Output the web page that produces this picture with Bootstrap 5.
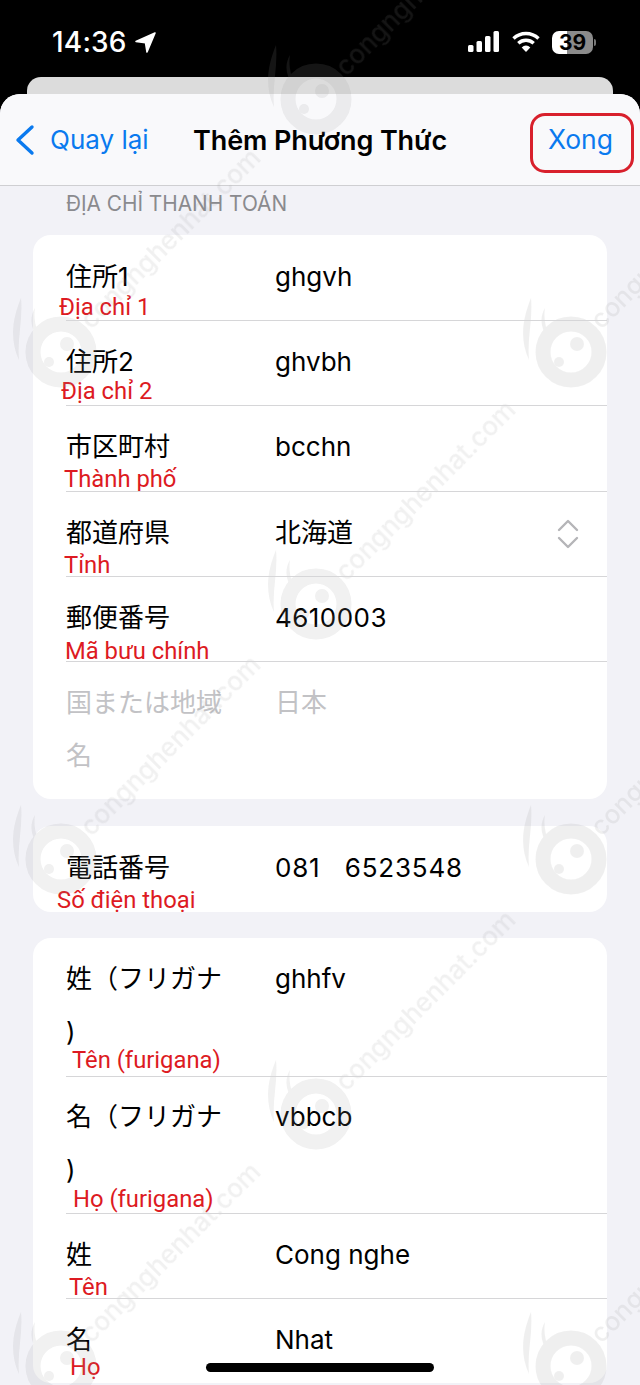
<!DOCTYPE html>
<html lang="vi">
<head>
<meta charset="utf-8">
<title>Thêm Phương Thức</title>
<link href="https://cdn.jsdelivr.net/npm/bootstrap@5.3.0/dist/css/bootstrap.min.css" rel="stylesheet">
<style>
html,body{height:1385px;overflow:hidden;background:#000}
body{font-family:"Inter","Noto Sans CJK JP",sans-serif;position:relative;width:640px}
.phone-status{height:77px;color:#fff;padding:0 44px 0 52px}
.clock{font-size:28px;font-weight:500;letter-spacing:.2px;line-height:1;margin-top:28px;font-family:"Inter",sans-serif;gap:7px}
.clock svg{margin-top:3px}
.status-icons{margin-top:31px;gap:8px}
.batt{width:41px;height:23px;border-radius:7px;background:linear-gradient(90deg,#fff 0 37%,#8b8b8b 37%);color:#000;font-size:21px;font-weight:700;line-height:23px;text-align:center;font-family:"Inter",sans-serif}
.batt-tip{width:2px;height:7px;background:#777;border-radius:0 2px 2px 0;margin-left:1px}
.back-sheet{height:17px;margin:0 27px;background:#dcdcdc;border-radius:14px 14px 0 0}
.sheet{background:#f2f2f7;border-radius:20px 20px 0 0;height:1291px;overflow:hidden}
.top-nav{height:92px;background:#f9f9fb;border-bottom:1px solid #cfcfd2;padding:0 15px;position:relative}
.back-link{color:#0a7aef;font-size:26px;gap:14px;font-weight:400}
.nav-title{position:absolute;left:0;right:0;top:28px;line-height:38px;text-align:center;font-size:27px;font-weight:600;color:#000;letter-spacing:-.1px}
.done-link{color:#0a7aef;font-size:26.5px;margin-right:12px}
.red-box{position:absolute;left:530px;top:19px;width:104px;height:60px;border:3px solid #d8202c;border-radius:15px}
.sec-head{color:#8a8a8e;font-size:20.8px;line-height:24px;padding:6px 0 0 66px;height:49px;text-transform:uppercase}
.form-box{background:#fff;border-radius:18px;margin:0 33px 27px;overflow:hidden}
.form-box.tight-box{margin-bottom:26.6px}
.form-line{padding:15px 0 17px;line-height:53.2px;font-size:26px;color:#000;position:relative;display:flex}
.form-line.wrap-line{padding:14px 0 17px;line-height:53.2px}
.form-line::after{content:"";position:absolute;left:33px;right:0;bottom:-1px;height:1px;background:#d6d6d8;z-index:1}
.form-line.last-line::after{display:none}
.f-label{width:165px;margin:0 44px 0 33px;flex:none;line-break:anywhere}
.f-val{flex:1}
.digits{letter-spacing:.45px}
.phone-digits{letter-spacing:.8px}
.dimmed{color:#c2c2c5}
.note{position:absolute;color:#dd1a22;font-size:23.8px;line-height:28px;font-family:"Roboto","Liberation Sans",sans-serif;white-space:nowrap}
.n1{left:26px;top:58px}.n2{left:28px;top:57px}.n3{left:31px;top:60px}.n4{left:31px;top:60px}.n5{left:32px;top:61px}
.n6{left:24px;top:60px}.n7{left:39px;top:108px}.n8{left:40px;top:109px}.n9{left:36px;top:60px}.n10{left:37px;top:55px}
.updown{position:absolute;right:27px;top:27px}
.home-bar{position:absolute;left:206px;top:1363px;width:228px;height:9px;background:#000;border-radius:5px}
.wm-layer{position:absolute;left:0;top:0;width:640px;height:1385px;overflow:hidden;pointer-events:none}
.wm{position:absolute;width:0;height:0;color:#969696;opacity:.14}
.wm svg{position:absolute;left:-46px;top:-62px;filter:blur(.7px)}
.wm span{position:absolute;left:28px;top:-40px;font-size:26px;line-height:32px;font-family:"Inter",sans-serif;transform:rotate(-45deg);transform-origin:left center;white-space:nowrap;font-weight:500}
.w1{left:312px;top:95px}.w2{left:57px;top:348px}.w3{left:567px;top:348px}.w4{left:312px;top:600px}.w5{left:57px;top:855px}.w6{left:567px;top:855px}.w7{left:312px;top:1110px}.w8{left:57px;top:1362px}.w9{left:567px;top:1362px}
</style>
</head>
<body>
<svg width="0" height="0" class="position-absolute"><defs>
  <symbol id="wm-logo" viewBox="0 0 90 110">
    <path d="M10 12C2 32-2 52 8 74 6 52 12 34 10 12zM24 22c-2 12 2 20 3 30-7-9-9-20-3-30z" fill="currentColor"/>
    <circle cx="50" cy="66" r="28" fill="none" stroke="currentColor" stroke-width="15"/>
    <circle cx="56" cy="58" r="7" fill="currentColor"/><circle cx="38" cy="76" r="5" fill="currentColor"/>
  </symbol>
</defs></svg>
<div class="phone-status d-flex justify-content-between">
  <div class="clock d-flex align-items-start">14:36
    <svg width="23" height="23" viewBox="0 0 23 23"><path d="M21 2 2 10.5l9.5 1.2L13 21z" fill="#fff" stroke="#fff" stroke-width="1.6" stroke-linejoin="round"/></svg>
  </div>
  <div class="status-icons d-flex align-items-start">
    <svg width="32" height="21" viewBox="0 0 32 21" fill="#fff"><rect x="0" y="14" width="5.5" height="7" rx="1.5"/><rect x="8.5" y="10" width="5.5" height="11" rx="1.5"/><rect x="17" y="5" width="5.5" height="16" rx="1.5"/><rect x="25.5" y="0" width="5.5" height="21" rx="1.5"/></svg>
    <svg class="ms-1" width="28" height="21" viewBox="0 0 28 21" fill="none" stroke="#fff" stroke-width="3.4"><path d="M1.5 7.5a18 18 0 0 1 25 0"/><path d="M6.3 12.3a11.3 11.3 0 0 1 15.4 0"/><path d="M14 21l-4.3-4.6a6 6 0 0 1 8.6 0z" fill="#fff" stroke="none"/></svg>
    <div class="d-flex align-items-center ms-1"><div class="batt">39</div><div class="batt-tip"></div></div>
  </div>
</div>
<div class="back-sheet"></div>
<div class="sheet">
  <div class="top-nav d-flex align-items-center justify-content-between">
    <div class="nav-title">Thêm Phương Thức</div>
    <div class="back-link d-flex align-items-center">
      <svg width="21" height="32" viewBox="0 0 21 32" fill="none" stroke="#0a7aef" stroke-width="3.4" stroke-linecap="round" stroke-linejoin="round"><path d="M17 3 3 16l14 13"/></svg>
      <span>Quay lại</span>
    </div>
    <div class="done-link">Xong</div>
    <div class="red-box"></div>
  </div>
  <div class="sec-head">Địa chỉ thanh toán</div>
  <div class="form-box">
    <div class="form-line"><div class="f-label">住所1</div><div class="f-val">ghgvh</div><div class="note n1">Địa chỉ 1</div></div>
    <div class="form-line"><div class="f-label">住所2</div><div class="f-val">ghvbh</div><div class="note n2">Địa chỉ 2</div></div>
    <div class="form-line"><div class="f-label">市区町村</div><div class="f-val">bcchn</div><div class="note n3">Thành phố</div></div>
    <div class="form-line"><div class="f-label">都道府県</div><div class="f-val">北海道</div><div class="note n4">Tỉnh</div>
      <svg class="updown" width="24" height="32" viewBox="0 0 24 32" fill="none" stroke="#b5b5b8" stroke-width="2.4" stroke-linecap="round" stroke-linejoin="round"><path d="M3 12 12 3l9 9"/><path d="M3 20l9 9 9-9"/></svg>
    </div>
    <div class="form-line"><div class="f-label">郵便番号</div><div class="f-val digits">4610003</div><div class="note n5">Mã bưu chính</div></div>
    <div class="form-line last-line dimmed"><div class="f-label">国または地域名</div><div class="f-val">日本</div></div>
  </div>
  <div class="form-box tight-box">
    <div class="form-line last-line"><div class="f-label">電話番号</div><div class="f-val phone-digits">081&nbsp;&nbsp;&nbsp;6523548</div><div class="note n6">Số điện thoại</div></div>
  </div>
  <div class="form-box">
    <div class="form-line wrap-line"><div class="f-label">姓（フリガナ)</div><div class="f-val">ghhfv</div><div class="note n7">Tên (furigana)</div></div>
    <div class="form-line wrap-line"><div class="f-label">名（フリガナ)</div><div class="f-val">vbbcb</div><div class="note n8">Họ (furigana)</div></div>
    <div class="form-line"><div class="f-label">姓</div><div class="f-val">Cong nghe</div><div class="note n9">Tên</div></div>
    <div class="form-line last-line"><div class="f-label">名</div><div class="f-val">Nhat</div><div class="note n10">Họ</div></div>
  </div>
</div>
<div class="home-bar"></div>
<div class="wm-layer">
<div class="wm w1"><svg width="90" height="110"><use href="#wm-logo"/></svg><span>congnghenhat.com</span></div>
<div class="wm w2"><svg width="90" height="110"><use href="#wm-logo"/></svg><span>congnghenhat.com</span></div>
<div class="wm w3"><svg width="90" height="110"><use href="#wm-logo"/></svg><span>congnghenhat.com</span></div>
<div class="wm w4"><svg width="90" height="110"><use href="#wm-logo"/></svg><span>congnghenhat.com</span></div>
<div class="wm w5"><svg width="90" height="110"><use href="#wm-logo"/></svg><span>congnghenhat.com</span></div>
<div class="wm w6"><svg width="90" height="110"><use href="#wm-logo"/></svg><span>congnghenhat.com</span></div>
<div class="wm w7"><svg width="90" height="110"><use href="#wm-logo"/></svg><span>congnghenhat.com</span></div>
<div class="wm w8"><svg width="90" height="110"><use href="#wm-logo"/></svg><span>congnghenhat.com</span></div>
<div class="wm w9"><svg width="90" height="110"><use href="#wm-logo"/></svg><span>congnghenhat.com</span></div>
</div>
</body>
</html>
